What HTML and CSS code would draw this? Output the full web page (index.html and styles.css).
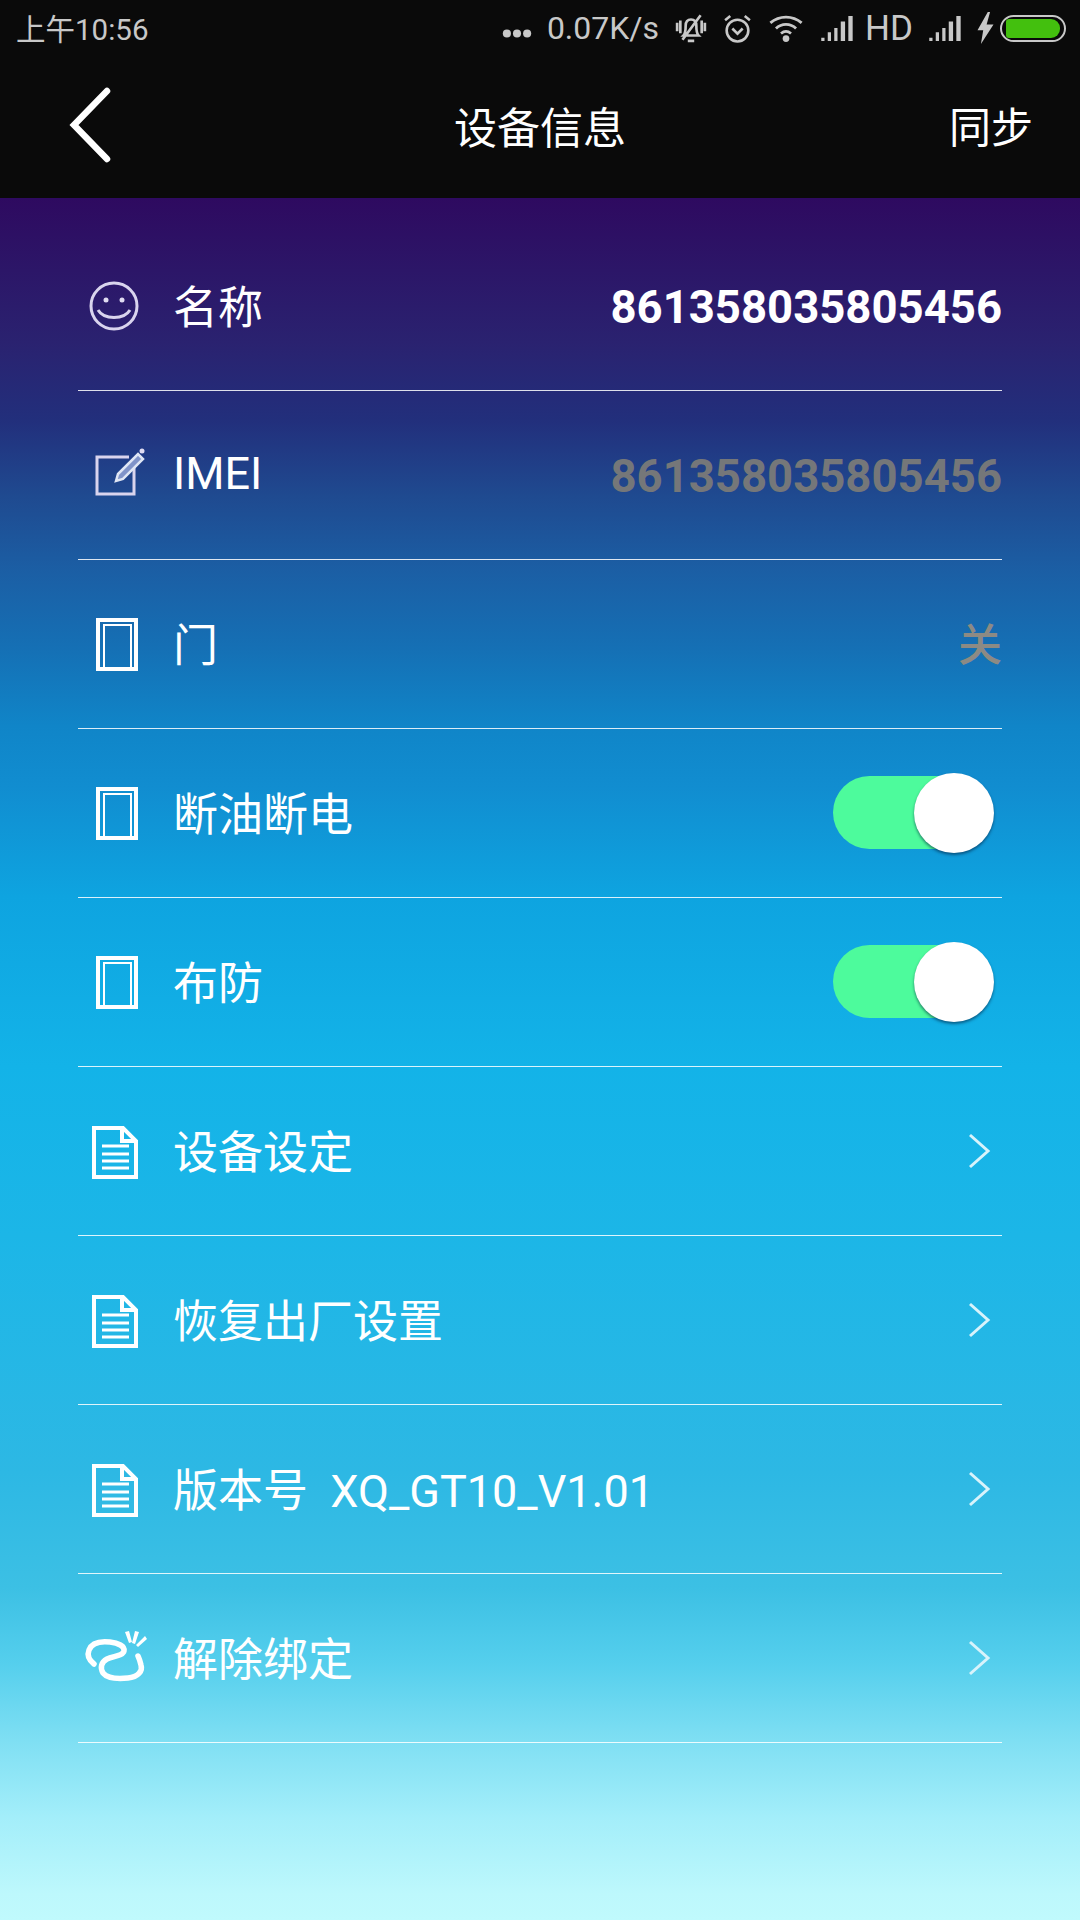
FILE: index.html
```html
<!DOCTYPE html>
<html lang="zh-CN">
<head>
<meta charset="utf-8">
<title>设备信息</title>
<link rel="stylesheet" href="styles.css">
</head>
<body>
<div class="screen">
  <header class="head">
    <div class="status">
      <span class="clock">上午10:56</span>
      <div class="status-right">
        <svg class="st dots" viewBox="0 0 26 8"><circle cx="4" cy="4" r="3.600"/><circle cx="13" cy="4" r="3.600"/><circle cx="22" cy="4" r="3.600"/></svg>
        <span class="speed">0.07K/s</span>
        <svg class="st bell" viewBox="0 0 30 30"><path class="ln" d="M8 22c2-2 2-5 2-9 0-4 2-6 5-6s5 2 5 6c0 4 0 7 2 9zM12 27h6M7 26 24 3M2 10v8M5 8v12M25 8v12M28 10v8"/></svg>
        <svg class="st alarm" viewBox="0 0 28 30"><circle class="ln" cx="14" cy="17" r="10.500"/><path class="ln" d="M9 15l5 5 5-5M2 7l5-4M26 7l-5-4"/></svg>
        <svg class="st wifi" viewBox="0 0 30 26"><path class="ln" d="M1 8c8-7 20-7 28 0M6 13c5-5 13-5 18 0M10.500 17.500c3-2.500 6-2.500 9 0"/><circle cx="15" cy="22" r="3"/></svg>
        <svg class="st signal" viewBox="0 0 30 24"><path d="M0 21h3v3H0zM6 16h3v8H6zM12 12h3v12h-3zM18 6h4v18h-4zM25 1h4v23h-4z"/></svg>
        <span class="hd">HD</span>
        <svg class="st signal second" viewBox="0 0 30 24"><path d="M0 21h3v3H0zM6 16h3v8H6zM12 12h3v12h-3zM18 6h4v18h-4zM25 1h4v23h-4z"/></svg>
        <svg class="st bolt" viewBox="0 0 14 28"><path d="M9 0 0 16h5l-2 12 11-17H8l3-11z"/></svg>
        <div class="battery"><span class="battery-fill"></span></div>
      </div>
    </div>
    <div class="bar">
      <svg class="back" viewBox="0 0 44 76"><path d="M39 4 6 38l33 34"/></svg>
      <span class="title">设备信息</span>
      <span class="sync">同步</span>
    </div>
  </header>
  <main class="list">
    <div class="row">
      <svg class="ico" viewBox="0 0 96 60"><g class="thin"><circle cx="36" cy="30" r="23"/><path d="M20 34c6 10 26 10 32 0"/></g><circle class="dot" cx="28" cy="24" r="2.500"/><circle class="dot" cx="44" cy="24" r="2.500"/></svg>
      <span class="label">名称</span><span class="value">861358035805456</span>
    </div>
    <div class="row">
      <svg class="ico" viewBox="0 0 96 60"><path class="thin" d="M51 12H19v37h37V21"/><path class="pen" d="M38 36l2-7 20-20 5 5-20 20z"/><circle class="dot" cx="64" cy="6" r="2.500"/></svg>
      <span class="label">IMEI</span><span class="value dim">861358035805456</span>
    </div>
    <div class="row">
      <svg class="ico" viewBox="0 0 96 60"><use href="#door"/></svg>
      <span class="label">门</span><span class="state">关</span>
    </div>
    <div class="row">
      <svg class="ico" viewBox="0 0 96 60"><use href="#door"/></svg>
      <span class="label">断油断电</span><span class="toggle"><span class="knob"></span></span>
    </div>
    <div class="row">
      <svg class="ico" viewBox="0 0 96 60"><use href="#door"/></svg>
      <span class="label">布防</span><span class="toggle"><span class="knob"></span></span>
    </div>
    <div class="row">
      <svg class="ico" viewBox="0 0 96 60"><use href="#doc"/></svg>
      <span class="label">设备设定</span><svg class="chev" viewBox="0 0 24 36"><path d="M3 2l18 16L3 34"/></svg>
    </div>
    <div class="row">
      <svg class="ico" viewBox="0 0 96 60"><use href="#doc"/></svg>
      <span class="label">恢复出厂设置</span><svg class="chev" viewBox="0 0 24 36"><path d="M3 2l18 16L3 34"/></svg>
    </div>
    <div class="row">
      <svg class="ico" viewBox="0 0 96 60"><use href="#doc"/></svg>
      <span class="label">版本号&nbsp;&nbsp;XQ_GT10_V1.01</span><svg class="chev" viewBox="0 0 24 36"><path d="M3 2l18 16L3 34"/></svg>
    </div>
    <div class="row">
      <svg class="ico" viewBox="0 0 96 60"><path class="link" d="M16 36C11 32 9 27 11 22C14 14 23 13 32 14C40 15 47 18 46 23C45 28 35 28 29 31C23 34 22 40 25 45C29 50 40 51 50 50C60 49 65 43 63 37C62 33 61 30 60 28"/><path class="rays" d="M47 4l4-1 3 11-3 1zM57 3l4 1-4 12-3-1zM67 8l2 3-9 8-2-2z"/></svg>
      <span class="label">解除绑定</span><svg class="chev" viewBox="0 0 24 36"><path d="M3 2l18 16L3 34"/></svg>
    </div>
  </main>
  <svg class="defs" width="0" height="0">
    <defs>
      <g id="door"><path class="door-a" d="M20 6h38v49H20z"/><path class="door-b" d="M26 11h27v44H26z"/></g>
      <g id="doc"><path class="doc-a" d="M16 7h29l13 13v36H16z"/><path class="doc-a" d="M44 7v13h14"/><path class="doc-b" d="M24 25h27M24 33h27M24 40h27M24 47h27"/></g>
    </defs>
  </svg>
</div>
</body>
</html>
```

FILE: styles.css
```css
* { box-sizing: border-box; }
html, body { margin: 0; padding: 0; }
body { font-family: Roboto, "Noto Sans CJK SC", sans-serif; color: #fff; }
.screen {
  width: 1080px;
  height: 1920px;
  display: flex;
  flex-direction: column;
  overflow: hidden;
  background: linear-gradient(180deg,
    #2e0a60 198px, #2a2270 343px, #222f7c 420px, #1f4a90 496px, #1b5fa5 573px,
    #1570b5 649px, #1085c8 726px, #118dd0 787px, #0ea4e0 897px, #13b3e8 1066px,
    #1cb6e7 1235px, #2db8e4 1473px, #3cc0e4 1588px, #55cfed 1664px, #7fdff3 1741px,
    #a3eefa 1817px, #bdf8fc 1894px, #c0fafd 1920px);
}
.head { height: 198px; background: #0a0a0a; flex: none; }
.status { height: 56px; display: flex; align-items: center; justify-content: space-between; padding: 0 14px 0 16px; color: #c8c8c8; }
.clock { font-size: 29.500px; margin-top: -3px; }
.status-right { display: flex; align-items: center; }
.st { fill: #c8c8c8; display: block; }
.st .ln { fill: none; stroke: #c8c8c8; stroke-width: 2.500; }
.dots { width: 30px; height: 9px; margin-top: 10px; }
.speed { margin-left: 15px; font-size: 32px; }
.bell { width: 32px; height: 32px; margin-left: 16px; }
.alarm { width: 29px; height: 31px; margin-left: 16px; }
.wifi { width: 34px; height: 29px; margin-left: 17px; }
.signal { width: 33px; height: 26px; margin-left: 18px; }
.second { margin-left: 16px; }
.hd { margin-left: 11px; font-size: 35px; }
.bolt { width: 17px; height: 32px; margin-left: 15px; }
.battery { width: 66px; height: 27px; margin-left: 6px; border: 2px solid #c8c8c8; border-radius: 14px; padding: 2px 4px; }
.battery-fill { display: block; height: 100%; background: #43c00e; border-radius: 3px 9px 9px 3px; }
.bar { height: 142px; display: flex; align-items: center; justify-content: space-between; padding: 0 47px 5px 68px; position: relative; }
.back { width: 44px; height: 76px; fill: none; stroke: #fff; stroke-linecap: round; margin-top: 1px; }
.back path { stroke-width: 6.500; }
.title { font-size: 43px; position: absolute; left: 0; right: 0; text-align: center; }
.sync { font-size: 42px; }
.list { margin: 0 78px; padding-top: 24px; }
.row { height: 169px; display: flex; align-items: center; border-bottom: 1px solid rgba(255,255,255,.85); }
.ico { width: 96px; height: 60px; flex: none; overflow: visible; }
.label { font-size: 45px; flex: 1; white-space: nowrap; margin: 0 0 3px -1px; }
.value { font-size: 45.500px; font-weight: 700; margin-top: 2px; }
.dim { color: #757779; }
.state { font-size: 44px; font-weight: 500; color: #8c8a84; margin-bottom: 4px; }
.chev { width: 24px; height: 36px; margin-right: 11px; fill: none; stroke: #d8f3fb; stroke-width: 3; }
.toggle { width: 157px; height: 73px; margin: 0 12px 2px 0; background: #4dfb9c; border-radius: 37px; position: relative; flex: none; }
.knob { position: absolute; right: -4px; top: -3px; width: 80px; height: 80px; border-radius: 50%; background: #fff; box-shadow: 0 2px 3px rgba(0,30,60,.55); }
.thin { fill: none; stroke: #d9d4ee; stroke-width: 3; }
.dot { fill: #e0dcf2; }
.pen { fill: #7f93c8; stroke: #dfe6f4; stroke-width: 2.500; }
.door-a { fill: none; stroke: #fff; stroke-width: 4; }
.door-b { fill: none; stroke: #fff; stroke-width: 2; }
.doc-a { fill: none; stroke: #fff; stroke-width: 4; }
.doc-b { fill: none; stroke: #fff; stroke-width: 3; }
.link { fill: none; stroke: #fff; stroke-width: 5.500; stroke-linecap: round; }
.rays { fill: #fff; }
.defs { position: absolute; }
```
